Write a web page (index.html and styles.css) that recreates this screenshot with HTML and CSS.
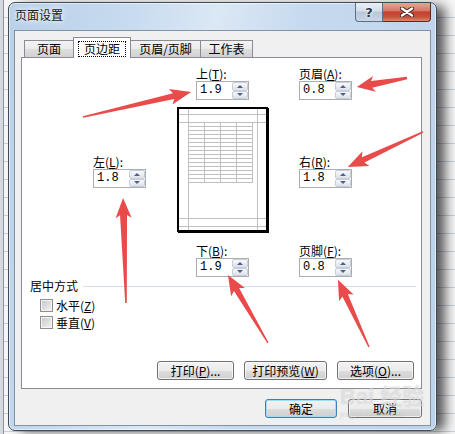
FILE: index.html
```html
<!DOCTYPE html>
<html lang="zh-CN">
<head>
    <meta charset="UTF-8">
    <title>页面设置</title>
    <link rel="stylesheet" href="styles.css">
</head>
<body>
    <div class="window">
        <div class="titlebar">
            <span class="title">页面设置</span>
            <div class="caption">
                <div class="cap help">?</div>
                <div class="cap close">
                    <svg width="14" height="10" viewBox="0 0 14 10">
                        <path d="M2 1.5 L12 8.5 M12 1.5 L2 8.5" stroke="#3a2320" stroke-width="4.2" stroke-linecap="round"/>
                        <path d="M2 1.5 L12 8.5 M12 1.5 L2 8.5" stroke="#fff" stroke-width="2.4" stroke-linecap="round"/>
                    </svg>
                </div>
            </div>
        </div>

        <div class="client">
            <div class="tabs">
                <div class="tab t1">页面</div>
                <div class="tab t2 active"><span class="focus">页边距</span></div>
                <div class="tab t3">页眉/页脚</div>
                <div class="tab t4">工作表</div>
            </div>

            <div class="panel">
                <div class="margins">
                    <div class="field f-top">
                        <label>上(<u>T</u>):</label>
                        <div class="spin"><span class="val">1.9</span><span class="btns"><i class="up"></i><i class="down"></i></span></div>
                    </div>
                    <div class="field f-header">
                        <label>页眉(<u>A</u>):</label>
                        <div class="spin"><span class="val">0.8</span><span class="btns"><i class="up"></i><i class="down"></i></span></div>
                    </div>
                    <div class="field f-left">
                        <label>左(<u>L</u>):</label>
                        <div class="spin"><span class="val">1.8</span><span class="btns"><i class="up"></i><i class="down"></i></span></div>
                    </div>
                    <div class="preview">
                        <svg width="87" height="121" viewBox="0 0 87 121">
                            <g stroke="#c0c0c0" stroke-width="1" fill="none" shape-rendering="crispEdges">
                                <path d="M9.5 0V121 M78.5 0V121 M0 5.5H87 M0 13.5H87 M0 109.5H87 M0 117.5H87"/>
                                <path d="M9.5 13.5H73.5V73.5H9.5Z M25.5 13.5V73.5 M41.5 13.5V73.5 M57.5 13.5V73.5"/>
                                <path d="M9.5 17.5H73.5 M9.5 21.5H73.5 M9.5 25.5H73.5 M9.5 29.5H73.5 M9.5 33.5H73.5 M9.5 37.5H73.5 M9.5 41.5H73.5 M9.5 45.5H73.5 M9.5 49.5H73.5 M9.5 53.5H73.5 M9.5 57.5H73.5 M9.5 61.5H73.5 M9.5 65.5H73.5 M9.5 69.5H73.5"/>
                            </g>
                        </svg>
                    </div>
                    <div class="field f-right">
                        <label>右(<u>R</u>):</label>
                        <div class="spin"><span class="val">1.8</span><span class="btns"><i class="up"></i><i class="down"></i></span></div>
                    </div>
                    <div class="field f-bottom">
                        <label>下(<u>B</u>):</label>
                        <div class="spin"><span class="val">1.9</span><span class="btns"><i class="up"></i><i class="down"></i></span></div>
                    </div>
                    <div class="field f-footer">
                        <label>页脚(<u>F</u>):</label>
                        <div class="spin"><span class="val">0.8</span><span class="btns"><i class="up"></i><i class="down"></i></span></div>
                    </div>
                </div>

                <div class="group">
                    <div class="group-title">居中方式</div>
                    <div class="check first"><span class="box"></span>水平(<u>Z</u>)</div>
                    <div class="check"><span class="box"></span>垂直(<u>V</u>)</div>
                </div>

                <div class="panel-buttons">
                    <button class="btn w77">打印(<u>P</u>)...</button>
                    <button class="btn w83">打印预览(<u>W</u>)</button>
                    <button class="btn w77">选项(<u>O</u>)...</button>
                </div>
            </div>

            <div class="dialog-buttons">
                <button class="btn ok">确定</button>
                <button class="btn cancel">取消</button>
            </div>
        </div>
    </div>

    <div class="watermark"><span class="wm-big">Bai 经验</span><span class="wm-small">jingyan.baidu.com</span></div>

    <!-- red annotation arrows -->
    <svg class="arrows" width="455" height="434" viewBox="0 0 455 434">
        <g fill="#e94b4b">
            <path transform="translate(83 117) rotate(-13)" d="M0 -0.7 L93 -3 L90 -8 L111 0 L90 8 L93 3 L0 0.7Z"/>
            <path transform="translate(407 78) rotate(169.8)" d="M0 -1.2 L36 -3.5 L33 -8 L51 0 L33 8 L36 3.5 L0 1.2Z"/>
            <path transform="translate(423 132) rotate(155)" d="M0 -0.7 L66 -3 L63 -8 L83 0 L63 8 L66 3 L0 0.7Z"/>
            <path transform="translate(126 303) rotate(-91.6)" d="M0 -0.8 L88 -3.5 L85 -8 L105 0 L85 8 L88 3.5 L0 0.8Z"/>
            <path transform="translate(268 343) rotate(-120.5)" d="M0 -0.7 L62 -3 L59 -8 L79 0 L59 8 L62 3 L0 0.7Z"/>
            <path transform="translate(369 347) rotate(-114.8)" d="M0 -0.7 L57 -3 L54 -8 L74 0 L54 8 L57 3 L0 0.7Z"/>
        </g>
    </svg>
</body>
</html>
```

FILE: styles.css
```css
* {
    box-sizing: border-box;
}
body {
    margin: 0;
    width: 455px;
    height: 434px;
    overflow: hidden;
    position: relative;
    padding: 2px 0 0 8px;
    font-family: "Noto Sans CJK SC", "Noto Sans", sans-serif;
    font-size: 12px;
    color: #000;
    background:
        linear-gradient(to right, #d6dae0 0, #d6dae0 3px, #8d939b 3px, #8d939b 4px, transparent 4px),
        repeating-linear-gradient(to bottom, #f5f5f5 0, #f5f5f5 17px, #c5cfdd 17px, #c5cfdd 18px);
}
u {
    text-decoration: underline;
    text-underline-offset: 1px;
}

/* window frame */
.window {
    width: 429px;
    height: 429px;
    border: 1px solid #3f4b59;
    border-radius: 7px;
    padding: 0 5px 4px;
    display: flex;
    flex-direction: column;
    background: linear-gradient(100deg, #b8d0e9 0%, #c8dbef 25%, #dbe8f5 42%, #c6d9ee 60%, #bdd3ea 100%);
    box-shadow: inset 0 0 0 1px rgba(255, 255, 255, 0.55), 10px 2px 12px -2px rgba(0, 0, 0, 0.65);
}
.titlebar {
    height: 27px;
    display: flex;
    padding-left: 1px;
}
.title {
    padding-top: 5px;
    line-height: 14px;
    color: #1a1a1a;
    text-shadow: 0 0 5px #fff, 0 0 8px rgba(255, 255, 255, 0.8);
}
.caption {
    margin-left: auto;
    display: flex;
    height: 19px;
}
.cap {
    display: flex;
    align-items: center;
    justify-content: center;
}
.help {
    width: 28px;
    border: 1px solid #5e7088;
    border-top: none;
    border-radius: 0 0 0 4px;
    background: linear-gradient(#e9eff6 0%, #d3deea 45%, #b7c8db 50%, #c9d7e6 100%);
    font: bold 13px "DejaVu Sans", sans-serif;
    color: #2c3a4b;
    text-shadow: 0 0 2px #fff, 0 0 3px #fff;
}
.close {
    width: 48px;
    border: 1px solid #5a2b26;
    border-top: none;
    border-left: none;
    border-radius: 0 0 4px 0;
    background: linear-gradient(#e6a597 0%, #d67a68 42%, #c4412d 50%, #c9513a 78%, #dc8a6e 100%);
}

/* client area */
.client {
    flex: 1;
    border: 1px solid #8293a6;
    background: #f0f0f0;
    padding: 6px 0 0 6px;
    display: flex;
    flex-direction: column;
}
.tabs {
    display: flex;
    align-items: flex-end;
    height: 20px;
    padding-left: 3px;
}
.tab {
    height: 17px;
    margin-left: -1px;
    border: 1px solid #898c95;
    border-bottom: none;
    background: linear-gradient(#f3f3f3 0%, #ebebeb 50%, #dddddd 51%, #d2d2d2 100%);
    text-align: center;
    line-height: 16px;
}
.t1 { width: 50px; margin-left: 0; }
.t2 { width: 58px; }
.t3 { width: 71px; }
.t4 { width: 53px; }
.tab.active {
    position: relative;
    z-index: 1;
    height: 21px;
    margin-bottom: -1px;
    padding-top: 3px;
    background: #fff;
}
.focus {
    display: inline-block;
    border: 1px dotted #000;
    padding: 0 5px;
    line-height: 14px;
}

.panel {
    width: 401px;
    height: 332px;
    border: 1px solid #898c95;
    background: #fff;
    padding-top: 9px;
    display: flex;
    flex-direction: column;
}
.margins {
    display: grid;
    grid-template-columns: 53px 31px 92px 30px 53px;
    grid-template-rows: 40px 137px 33px;
    padding-left: 71px;
}
.f-top { grid-area: 1 / 3; margin-left: 19px; }
.f-header { grid-area: 1 / 5; }
.f-left { grid-area: 2 / 1; margin-top: 48px; }
.preview { grid-area: 2 / 3; }
.f-right { grid-area: 2 / 5; margin-top: 48px; }
.f-bottom { grid-area: 3 / 3; margin-left: 19px; }
.f-footer { grid-area: 3 / 5; }

.field {
    width: 53px;
}
.field label {
    display: block;
    height: 14px;
    line-height: 14px;
    white-space: nowrap;
}
.spin {
    display: flex;
    height: 19px;
    border: 1px solid #a9adb4;
    background: #fff;
}
.spin .val {
    flex: 1;
    padding-left: 3px;
    font-family: "Liberation Mono", monospace;
    font-size: 12px;
    line-height: 17px;
}
.spin .btns {
    width: 16px;
    display: flex;
    flex-direction: column;
}
.spin i {
    flex: 1;
    display: flex;
    align-items: center;
    justify-content: center;
    border: 1px solid #c7ced8;
    border-radius: 2px;
    background: linear-gradient(#f7f8fa, #dde2e9);
}
.spin i::after {
    content: "";
    border-left: 3px solid transparent;
    border-right: 3px solid transparent;
}
.spin .up::after {
    border-bottom: 3px solid #4a5f8e;
}
.spin .down::after {
    border-top: 3px solid #4a5f8e;
}

.preview {
    width: 91px;
    height: 125px;
    border: 2px solid #000;
    box-shadow: 1px 1px 0 #000;
    background: #fff;
}
.preview svg {
    display: block;
}

/* centre on page group */
.group {
    margin-top: 2px;
    padding: 0 5px 0 8px;
}
.group-title {
    display: flex;
    align-items: center;
    line-height: 14px;
}
.group-title::after {
    content: "";
    flex: 1;
    height: 1px;
    margin-left: 5px;
    background: #d5dfe5;
}
.check {
    display: flex;
    align-items: center;
    height: 17px;
    padding-left: 10px;
}
.check.first {
    margin-top: 4px;
}
.box {
    width: 13px;
    height: 13px;
    margin-right: 3px;
    border: 1px solid #8e8f8f;
    background: linear-gradient(135deg, #c2c6cc 0%, #f4f4f4 100%);
    box-shadow: inset 0 0 0 1px #f4f4f4;
}

/* buttons */
.btn {
    height: 19px;
    padding: 0;
    border: 1px solid #707070;
    border-radius: 3px;
    background: linear-gradient(#f2f2f2 0%, #ebebeb 50%, #dddddd 51%, #cfcfcf 100%);
    box-shadow: inset 0 0 0 1px rgba(255, 255, 255, 0.7);
    font-family: inherit;
    font-size: 12px;
    line-height: 16px;
    color: #000;
}
.w77 { width: 77px; }
.w83 { width: 83px; }
.panel-buttons {
    margin-top: auto;
    display: flex;
    justify-content: flex-end;
    gap: 10px;
    padding: 0 7px 8px 0;
}
.dialog-buttons {
    margin-top: 10px;
    display: flex;
    justify-content: flex-end;
    gap: 11px;
    padding-right: 8px;
}
.ok {
    width: 72px;
    border-color: #3c7fb1;
    box-shadow: inset 0 0 0 1px #9fdcf7;
}
.cancel {
    width: 74px;
}

/* overlays */
.watermark {
    position: absolute;
    left: 340px;
    top: 384px;
    display: flex;
    flex-direction: column;
    color: rgba(255, 255, 255, 0.45);
    text-shadow: 0 0 1px rgba(120, 120, 120, 0.35);
    pointer-events: none;
}
.wm-big {
    font: bold 22px "Liberation Sans", "Noto Sans CJK SC", sans-serif;
    line-height: 26px;
}
.wm-small {
    font: 8px "Liberation Sans", sans-serif;
    line-height: 10px;
}
.arrows {
    position: absolute;
    left: 0;
    top: 0;
    pointer-events: none;
}
```
